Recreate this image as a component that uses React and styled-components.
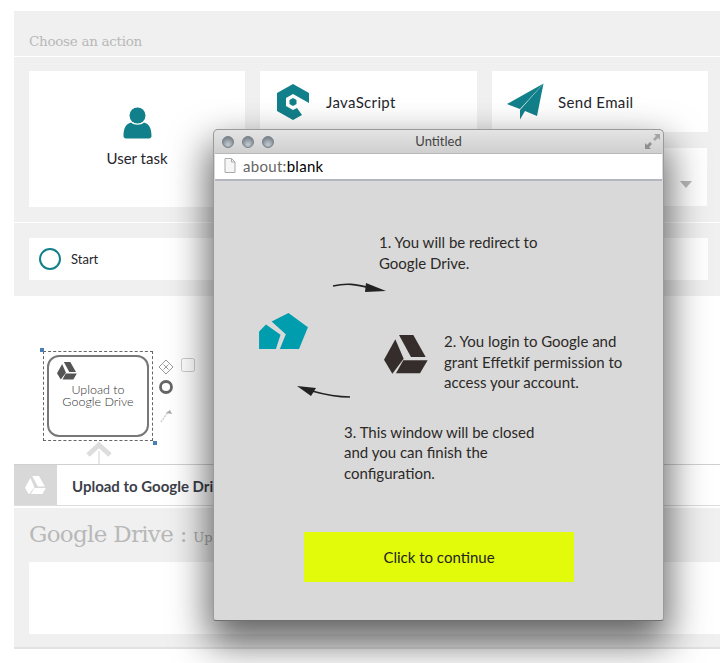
import React from "react";
import styled, { createGlobalStyle } from "styled-components";

const teal = "#12808a";
const sans = `Lato, "Noto Sans", sans-serif`;
const slab = `"DejaVu Serif", "Liberation Serif", serif`;

const GlobalStyle = createGlobalStyle`
  html, body { margin: 0; padding: 0; background: #fff; }
  * { box-sizing: border-box; }
`;

const Page = styled.div`
  position: relative;
  width: 720px;
  height: 663px;
  overflow: hidden;
  background: #fff;
  padding: 11px 0 0 14px;
  font-family: ${sans};
  color: #25252c;
`;

/* top panel */
const ActionPanel = styled.section`
  background: #f0f0f0;
  height: 285px;
`;

const ChooseHeader = styled.h2`
  margin: 0;
  height: 46px;
  padding: 21px 0 0 15px;
  border-bottom: 1px solid #fff;
  font: 400 13.5px/18px ${slab};
  color: #b8b8b8;
  letter-spacing: -0.3px;
`;

const CardGrid = styled.div`
  display: grid;
  grid-template-columns: 216px 217px 216px;
  grid-template-rows: 61px 60px;
  gap: 15px;
  padding: 14px 15px 15px;
  border-bottom: 1px solid #fff;
`;

const BigCard = styled.div`
  grid-row: span 2;
  background: #fff;
  display: flex;
  flex-direction: column;
  align-items: center;
  padding-top: 36px;
  gap: 10px;
  font-size: 15px;
`;

const RowCard = styled.div`
  background: #fff;
  display: flex;
  align-items: center;
  gap: ${(p) => p.$gap}px;
  padding-left: ${(p) => p.$pad}px;
  font-size: 15px;
  letter-spacing: 0.35px;
`;

const SelectCard = styled.div`
  grid-column: 3;
  background: #fff;
  border: 1px solid #f0f0f0;
  display: flex;
  justify-content: flex-end;
  align-items: flex-end;
  padding: 0 15px 18px 0;
`;

const Caret = styled.span`
  width: 0;
  height: 0;
  border-left: 6px solid transparent;
  border-right: 6px solid transparent;
  border-top: 7px solid #bbb;
`;

const StartRow = styled.div`
  margin: 15px 12px 0 15px;
  height: 42px;
  background: #fff;
  display: flex;
  align-items: center;
  gap: 10px;
  padding-left: 10px;
  font-size: 13px;
`;

const StartCircle = styled.span`
  width: 22px;
  height: 22px;
  border-radius: 50%;
  border: 2.5px solid ${teal};
`;

/* bpmn canvas */
const Canvas = styled.div`
  position: relative;
  height: 168px;
`;

const Selection = styled.div`
  position: absolute;
  left: 29px;
  top: 55px;
  width: 110px;
  height: 90px;
  border: 1px dashed #666;
`;

const Handle = styled.span`
  position: absolute;
  width: 4px;
  height: 4px;
  background: #4a7fb5;
  ${(p) => (p.$end ? "right: -5px; bottom: -5px;" : "left: -4px; top: -4px;")}
`;

const TaskNode = styled.div`
  position: absolute;
  left: 33px;
  top: 59px;
  width: 102px;
  height: 82px;
  border: 2px solid #777;
  border-radius: 12px;
  background: #fff;
  padding: 5px 0 0 8px;
`;

const NodeLabel = styled.div`
  margin: 1px 0 0 -8px;
  text-align: center;
  font: 300 12.5px/12px ${sans};
  color: #333;
`;

const ToolPalette = styled.svg`
  position: absolute;
  left: 144px;
  top: 61px;
`;

const Chevron = styled.svg`
  position: absolute;
  left: 71px;
  top: 146px;
`;

/* drive bar and form */
const DriveBar = styled.div`
  height: 42px;
  display: flex;
  background: #fff;
  border-top: 1px solid #d0d0d0;
  border-bottom: 1px solid #ddd;
`;

const DriveTab = styled.div`
  width: 43px;
  background: #d8d8d8;
  display: flex;
  align-items: center;
  justify-content: center;
`;

const DriveTitle = styled.div`
  padding: 11px 0 0 15px;
  font: 700 15px/20px ${sans};
  color: #3c3f4a;
`;

const FormPanel = styled.section`
  margin-top: 2px;
  height: 141px;
  background: #f0f0f0;
  border-bottom: 2px solid #e2e2e2;
  padding: 11px 0 0 15px;
`;

const FormTitle = styled.h1`
  margin: 0 0 12px;
  height: 31px;
  font: 400 23px/31px ${slab};
  color: #b8b8b8;
  letter-spacing: -0.7px;
`;

const FormSub = styled.span`
  font-size: 13px;
  color: #aaa;
  letter-spacing: 0;
`;

const FormBox = styled.div`
  height: 72px;
  background: #fff;
`;

/* popup window */
const PopupWindow = styled.div`
  position: absolute;
  left: 213px;
  top: 129px;
  width: 451px;
  height: 492px;
  background: #d9d9d9;
  border-radius: 5px 5px 3px 3px;
  border: 1px solid #9a9a9a;
  border-bottom-color: #707070;
  box-shadow: 0 18px 38px 4px rgba(0, 0, 0, 0.62);
`;

const TitleBar = styled.div`
  height: 23px;
  display: flex;
  align-items: center;
  justify-content: center;
  position: relative;
  padding-bottom: 2px;
  border-radius: 5px 5px 0 0;
  background: linear-gradient(#e4e4e4, #cfcfcf);
  font-size: 13px;
  color: #444;
`;

const Lights = styled.div`
  position: absolute;
  left: 8px;
  top: 6px;
  display: flex;
  gap: 8px;
`;

const Light = styled.span`
  width: 12px;
  height: 12px;
  border-radius: 50%;
  border: 1px solid #777f86;
  background: radial-gradient(circle at 50% 75%, #c4ccd2, #7c868e 75%);
`;

const ExpandIcon = styled.svg`
  position: absolute;
  right: 3px;
  top: 4px;
`;

const AddressBar = styled.div`
  margin: 0 1px;
  height: 28px;
  background: #fff;
  border-top: 1px solid #b8b8b8;
  border-bottom: 2px solid #b4b7bd;
  display: flex;
  align-items: center;
  gap: 7px;
  padding: 0 0 2px 9px;
  font-size: 15px;
  letter-spacing: 0.3px;
  color: #000;
`;

const Faded = styled.span`
  color: #666;
`;

const PopupBody = styled.div`
  position: relative;
  padding-top: 51px;
  font-size: 15px;
  line-height: 20.5px;
  color: #2c2927;
`;

const Step = styled.p`
  margin: ${(p) => p.$margin};
  width: ${(p) => p.$width}px;
`;

const Middle = styled.div`
  display: flex;
  align-items: flex-start;
  margin: 62px 0 0 170px;
  gap: 16px;
`;

const LogoMark = styled.svg`
  position: absolute;
  left: 45px;
  top: 132px;
`;

const ArrowMark = styled.svg`
  position: absolute;
  left: ${(p) => p.$left}px;
  top: ${(p) => p.$top}px;
`;

const ContinueButton = styled.button`
  display: block;
  width: 270px;
  height: 50px;
  margin: 49px 0 0 90px;
  border: 0;
  background: #e2fb0a;
  font: 400 15px ${sans};
  color: #222;
`;

const DriveIcon = ({ size, color }) => (
  <svg width={size} height={(size * 116) / 132} viewBox="0 0 132 116">
    <g fill={color}>
      <polygon points="45,0 88,0 125,66 81,66" />
      <polygon points="34,13 59,71 25,116 0,74" />
      <polygon points="58,76 131,76 108,115 36,115" />
    </g>
  </svg>
);

const PersonIcon = () => (
  <svg width="29" height="32" viewBox="0 0 29 32">
    <circle cx="14.5" cy="8.5" r="8" fill={teal} />
    <path
      d="M0.5 29 C0.5 21 3 17 8 15.5 C11 18.5 18 18.5 21 15.5 C26 17 28.5 21 28.5 29 C28.5 30.5 27.5 31.5 26 31.5 L3 31.5 C1.5 31.5 0.5 30.5 0.5 29 Z"
      fill={teal}
    />
  </svg>
);

const ScriptIcon = () => (
  <svg width="33" height="36" viewBox="0 0 33 36">
    <path d="M16 0 L32 9 V19 L16 10 L9 14 V22 L16 26 L20 24 L25 31 L16 36 L0 27 V9 Z" fill={teal} />
    <polygon points="16,14 19.5,16 19.5,20 16,22 12.5,20 12.5,16" fill={teal} />
  </svg>
);

const SendIcon = () => (
  <svg width="37" height="37" viewBox="0 0 37 37">
    <path d="M36.5 0.5 L13 26 L0 21 Z" fill={teal} />
    <path d="M36.5 0.5 L30 33 L18 28 L13 36.5 L13 27 Z" fill={teal} />
  </svg>
);

const App = () => {
  return (
    <Page>
      <GlobalStyle />
      <ActionPanel>
        <ChooseHeader>Choose an action</ChooseHeader>
        <CardGrid>
          <BigCard>
            <PersonIcon />
            User task
          </BigCard>
          <RowCard $pad={17} $gap={16}>
            <ScriptIcon />
            JavaScript
          </RowCard>
          <RowCard $pad={15} $gap={14}>
            <SendIcon />
            Send Email
          </RowCard>
          <SelectCard>
            <Caret />
          </SelectCard>
        </CardGrid>
        <StartRow>
          <StartCircle />
          Start
        </StartRow>
      </ActionPanel>

      <Canvas>
        <Selection>
          <Handle />
          <Handle $end />
        </Selection>
        <TaskNode>
          <DriveIcon size={20} color="#555" />
          <NodeLabel>
            Upload to
            <br />
            Google Drive
          </NodeLabel>
        </TaskNode>
        <ToolPalette width="44" height="70" viewBox="0 0 44 70">
          <polygon points="8,3 15,10 8,17 1,10" fill="#fff" stroke="#999" />
          <path d="M5.5 7.5 L10.5 12.5 M10.5 7.5 L5.5 12.5" stroke="#999" />
          <rect x="23.5" y="1.5" width="13" height="13" rx="2" fill="#fff" stroke="#ccc" />
          <circle cx="8" cy="30" r="5.5" fill="none" stroke="#666" strokeWidth="2.8" />
          <path d="M3 65 L10 55" stroke="#ccc" strokeDasharray="2 1" strokeWidth="1.4" fill="none" />
          <path d="M8 56 L12 53 L14 57 Z" fill="#aaa" />
        </ToolPalette>
        <Chevron width="28" height="22" viewBox="0 0 28 22">
          <path d="M3 13 L14 3 L25 13" fill="none" stroke="#ddd" strokeWidth="5" />
          <path d="M14 9 L14 22" stroke="#d0d0d0" />
        </Chevron>
      </Canvas>

      <DriveBar>
        <DriveTab>
          <DriveIcon size={21} color="#fff" />
        </DriveTab>
        <DriveTitle>Upload to Google Drive</DriveTitle>
      </DriveBar>
      <FormPanel>
        <FormTitle>
          Google Drive : <FormSub>Upload</FormSub>
        </FormTitle>
        <FormBox />
      </FormPanel>

      <PopupWindow>
        <TitleBar>
          <Lights>
            <Light />
            <Light />
            <Light />
          </Lights>
          Untitled
          <ExpandIcon width="15" height="15" viewBox="0 0 15 15">
            <path d="M15 0 L9 0 L11 2 L8 5 L10 7 L13 4 L15 6 Z" fill="#a5a5a5" />
            <path d="M0 15 L6 15 L4 13 L7 10 L5 8 L2 11 L0 9 Z" fill="#8e8e8e" />
          </ExpandIcon>
        </TitleBar>
        <AddressBar>
          <svg width="12" height="15" viewBox="0 0 12 15">
            <path d="M1 .5 H7.5 L11 4 V14.5 H1 Z" fill="#f6f6f6" stroke="#aaa" />
            <path d="M7.5 .5 V4 H11" fill="none" stroke="#aaa" />
          </svg>
          <span>
            <Faded>about:</Faded>blank
          </span>
        </AddressBar>
        <PopupBody>
          <Step $margin="0 0 0 165px" $width={190}>
            1. You will be redirect to Google Drive.
          </Step>
          <Middle>
            <DriveIcon size={44} color="#352d2b" />
            <Step $margin="-4px 0 0 0" $width={200}>
              2. You login to Google and grant Effetkif permission to access your account.
            </Step>
          </Middle>
          <Step $margin="29px 0 0 130px" $width={215}>
            3. This window will be closed and you can finish the configuration.
          </Step>
          <ContinueButton>Click to continue</ContinueButton>

          <LogoMark width="49" height="36" viewBox="0 0 148 109">
            <polygon points="38,26 89,0 148,43 121,109 63,109 81,64" fill="#009dae" />
            <polygon points="0,56 21,35 65,66 51,109 0,109" fill="#009dae" />
          </LogoMark>
          <ArrowMark $left={118} $top={101} width="56" height="14" viewBox="0 0 56 14">
            <path d="M1 4 C14 1 24 2 38 6" fill="none" stroke="#222" strokeWidth="1.6" />
            <polygon points="34,1 54,9 33,10" fill="#222" />
          </ArrowMark>
          <ArrowMark $left={82} $top={204} width="56" height="14" viewBox="0 0 56 14">
            <path d="M54 12 C40 12 30 10 16 6" fill="none" stroke="#222" strokeWidth="1.6" />
            <polygon points="1,1 20,3 15,11" fill="#222" />
          </ArrowMark>
        </PopupBody>
      </PopupWindow>
    </Page>
  );
};

export default App;
